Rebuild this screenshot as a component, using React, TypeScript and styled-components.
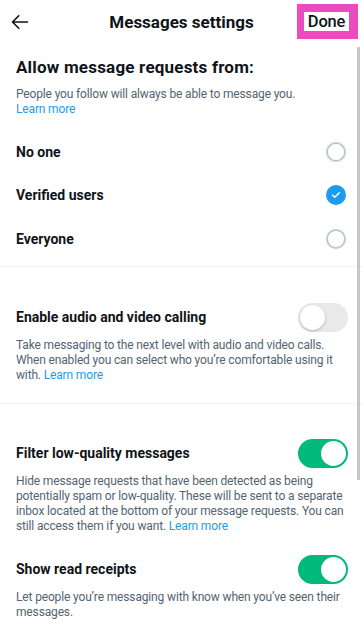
import React from "react";
import styled, { createGlobalStyle } from "styled-components";

const Global = createGlobalStyle`
  html, body { margin: 0; padding: 0; background: #fff; }
  body { font-family: Roboto, "Noto Sans", "Liberation Sans", sans-serif; color: #0f1419; -webkit-font-smoothing: antialiased; }
  * { box-sizing: border-box; }
`;

const Screen = styled.div`
  position: relative;
  width: 363px;
  height: 628px;
  overflow: hidden;
  background: #fff;
`;

const Header = styled.header`
  height: 44px;
  display: grid;
  grid-template-columns: 1fr auto 1fr;
  align-items: center;
  padding: 0 5px 0 10px;
`;

const BackButton = styled.button`
  justify-self: start;
  border: 0;
  background: none;
  padding: 0;
  width: 20px;
  height: 20px;
  display: flex;
  align-items: center;
  justify-content: center;
  color: #0f1419;
`;

const Title = styled.h1`
  margin: 0;
  font-size: 17px;
  font-weight: 700;
  letter-spacing: 0px;
  transform: translateX(-2.5px);
`;

const DoneBox = styled.div`
  justify-self: end;
  border: 8px solid #ec4bbf;
  border-left-width: 7px;
  border-right-width: 9px;
  display: flex;
  align-items: center;
  justify-content: center;
  width: 61px;
  height: 35px;
  margin-top: -1px;
  background: #fff;
`;

const DoneText = styled.span`
  font-size: 16.5px;
  font-weight: 500;
  letter-spacing: -0.2px;
  color: #0f1419;
`;

const Scrollbar = styled.div`
  position: absolute;
  left: 357px;
  top: 47px;
  width: 3px;
  height: 433px;
  background: #c6c6c6;
  border-radius: 1px;
`;

const Section = styled.section<{ $pt?: number; $pb?: number }>`
  padding: ${(p) => p.$pt ?? 0}px 16px ${(p) => p.$pb ?? 0}px 16px;
`;

const SectionTitle = styled.h2`
  margin: 0;
  font-size: 17px;
  font-weight: 700;
  line-height: 24px;
  letter-spacing: 0.2px;
`;

const Desc = styled.p<{ $mt?: number }>`
  margin: ${(p) => p.$mt ?? 0}px 0 0;
  font-size: 12px;
  line-height: 15px;
  color: #536471;
  letter-spacing: -0.15px;
`;

const Link = styled.a`
  display: inline-block;
  line-height: 15px;
  color: #1d9bf0;
  text-decoration: none;
`;

const OptionList = styled.div`
  margin-top: 13px;
  display: flex;
  flex-direction: column;
`;

const Option = styled.div`
  height: 43.5px;
  display: flex;
  align-items: center;
  justify-content: space-between;
  padding-right: 1px;
`;

const OptionLabel = styled.span`
  font-size: 14px;
  font-weight: 700;
  letter-spacing: 0px;
`;

const Radio = styled.span<{ $checked?: boolean }>`
  width: 20px;
  height: 20px;
  border-radius: 50%;
  display: flex;
  align-items: center;
  justify-content: center;
  border: ${(p) => (p.$checked ? "0" : "2px solid #b9cad3")};
  background: ${(p) => (p.$checked ? "#1d9bf0" : "transparent")};
`;

const Divider = styled.hr`
  margin: 0;
  border: 0;
  height: 1px;
  background: #eff3f4;
`;

const ToggleRow = styled.div`
  display: flex;
  align-items: center;
  justify-content: space-between;
  height: 29px;
`;

const ToggleLabel = styled.span`
  font-size: 14px;
  font-weight: 700;
  letter-spacing: 0px;
`;

const Toggle = styled.span<{ $on?: boolean }>`
  width: 50px;
  height: 29px;
  border-radius: 15px;
  margin-right: -1px;
  display: flex;
  align-items: center;
  padding: 2px;
  justify-content: ${(p) => (p.$on ? "flex-end" : "flex-start")};
  background: ${(p) => (p.$on ? "#00ba7c" : "#e9e9e9")};
`;

const Knob = styled.span<{ $on?: boolean }>`
  width: 25px;
  height: 25px;
  border-radius: 50%;
  background: #fff;
  box-shadow: ${(p) => (p.$on ? "none" : "0 1px 3px rgba(0,0,0,0.25)")};
`;

const Check = () => (
  <svg width="10" height="10" viewBox="0 0 24 24" fill="none">
    <path d="M4 12.5l5 5L20 6.5" stroke="#fff" strokeWidth="3.6" strokeLinecap="round" strokeLinejoin="round" />
  </svg>
);

const options = [
  { label: "No one", checked: false },
  { label: "Verified users", checked: true },
  { label: "Everyone", checked: false },
];

export default function App() {
  return (
    <Screen>
      <Global />
      <Header>
        <BackButton aria-label="Back">
          <svg width="20" height="20" viewBox="0 0 24 24" fill="none">
            <path d="M21 12H3.5M10.5 4.5L3 12l7.5 7.5" stroke="#0f1419" strokeWidth="2" strokeLinecap="round" strokeLinejoin="round" />
          </svg>
        </BackButton>
        <Title>Messages settings</Title>
        <DoneBox>
          <DoneText>Done</DoneText>
        </DoneBox>
      </Header>
      <Scrollbar />

      <Section $pt={11} $pb={5}>
        <SectionTitle>Allow message requests from:</SectionTitle>
        <Desc $mt={8}>
          People you follow will always be able to message you.
          <br />
          <Link>Learn more</Link>
        </Desc>
        <OptionList>
          {options.map((o) => (
            <Option key={o.label}>
              <OptionLabel>{o.label}</OptionLabel>
              <Radio $checked={o.checked}>{o.checked && <Check />}</Radio>
            </Option>
          ))}
        </OptionList>
      </Section>
      <Divider />

      <Section $pt={36} $pb={20}>
        <ToggleRow>
          <ToggleLabel>Enable audio and video calling</ToggleLabel>
          <Toggle>
            <Knob />
          </Toggle>
        </ToggleRow>
        <Desc $mt={6}>
          Take messaging to the next level with audio and video calls. When enabled you can select who you’re comfortable using it with.{" "}
          <Link>Learn more</Link>
        </Desc>
      </Section>
      <Divider />

      <Section $pt={35}>
        <ToggleRow>
          <ToggleLabel>Filter low-quality messages</ToggleLabel>
          <Toggle $on>
            <Knob $on />
          </Toggle>
        </ToggleRow>
        <Desc $mt={6}>
          Hide message requests that have been detected as being potentially spam or low-quality. These will be sent to a separate inbox located at the bottom of your message requests. You can still access them if you want.{" "}
          <Link>Learn more</Link>
        </Desc>
      </Section>

      <Section $pt={21}>
        <ToggleRow>
          <ToggleLabel>Show read receipts</ToggleLabel>
          <Toggle $on>
            <Knob $on />
          </Toggle>
        </ToggleRow>
        <Desc $mt={6}>
          Let people you’re messaging with know when you’ve seen their messages.
        </Desc>
      </Section>
    </Screen>
  );
}
